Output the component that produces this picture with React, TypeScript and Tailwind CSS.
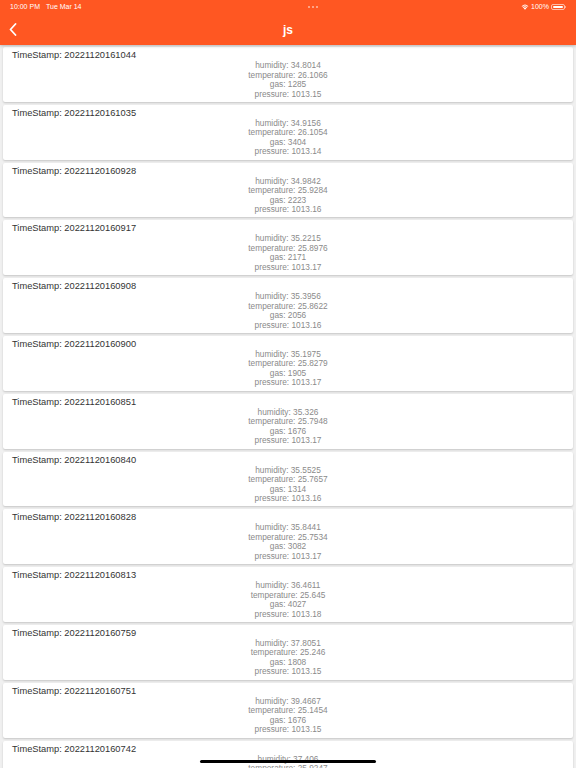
import React from "react";

type Row = { ts: string; h: string; t: string; g: string; p: string };

const rows: Row[] = [
  { ts: "20221120161044", h: "34.8014", t: "26.1066", g: "1285", p: "1013.15" },
  { ts: "20221120161035", h: "34.9156", t: "26.1054", g: "3404", p: "1013.14" },
  { ts: "20221120160928", h: "34.9842", t: "25.9284", g: "2223", p: "1013.16" },
  { ts: "20221120160917", h: "35.2215", t: "25.8976", g: "2171", p: "1013.17" },
  { ts: "20221120160908", h: "35.3956", t: "25.8622", g: "2056", p: "1013.16" },
  { ts: "20221120160900", h: "35.1975", t: "25.8279", g: "1905", p: "1013.17" },
  { ts: "20221120160851", h: "35.326", t: "25.7948", g: "1676", p: "1013.17" },
  { ts: "20221120160840", h: "35.5525", t: "25.7657", g: "1314", p: "1013.16" },
  { ts: "20221120160828", h: "35.8441", t: "25.7534", g: "3082", p: "1013.17" },
  { ts: "20221120160813", h: "36.4611", t: "25.645", g: "4027", p: "1013.18" },
  { ts: "20221120160759", h: "37.8051", t: "25.246", g: "1808", p: "1013.15" },
  { ts: "20221120160751", h: "39.4667", t: "25.1454", g: "1676", p: "1013.15" },
  { ts: "20221120160742", h: "37.406", t: "25.9247", g: "1502", p: "1013.16" },
];

function Card({ r }: { r: Row }) {
  return (
    <div className="h-[54.8px] shrink-0 bg-white rounded-[2px] shadow-[0_1px_2px_rgba(0,0,0,0.18)] flex flex-col pt-[2px]">
      <div className="pl-[9px] text-[9.3px] leading-[12px] text-[#333333]">TimeStamp: {r.ts}</div>
      <div className="flex flex-col items-center text-[8.3px] leading-[9.5px] text-[#8a8a8a]">
        <div>humidity: {r.h}</div>
        <div>temperature: {r.t}</div>
        <div>gas: {r.g}</div>
        <div>pressure: {r.p}</div>
      </div>
    </div>
  );
}

export default function App() {
  return (
    <div
      className="relative w-[576px] h-[768px] overflow-hidden bg-[#f0f0f0] flex flex-col"
      style={{ fontFamily: '"Liberation Sans", Arial, sans-serif' }}
    >
      <div className="relative z-10 h-[45px] shrink-0 bg-[#ff5722] shadow-[0_1px_3px_rgba(0,0,0,0.25)] flex flex-col text-white">
        <div className="h-[14px] flex items-center justify-between px-[10px] text-[7px]">
          <div className="flex gap-[6px]">
            <span>10:00 PM</span>
            <span>Tue Mar 14</span>
          </div>
          <div className="flex gap-[2px] ml-[24px]">
            <span className="w-[2px] h-[2px] rounded-full bg-white/60" />
            <span className="w-[2px] h-[2px] rounded-full bg-white/60" />
            <span className="w-[2px] h-[2px] rounded-full bg-white/60" />
          </div>
          <div className="flex items-center gap-[2px]">
            <svg width="8" height="6" viewBox="0 0 16 12">
              <path d="M8 11.5 L5.3 8.6 A4 4 0 0 1 10.7 8.6 Z" fill="white" />
              <path d="M3.4 6.6 A6.8 6.8 0 0 1 12.6 6.6 L11.3 8 A5 5 0 0 0 4.7 8 Z" fill="white" />
              <path d="M1.2 4.3 A10 10 0 0 1 14.8 4.3 L13.5 5.7 A8.1 8.1 0 0 0 2.5 5.7 Z" fill="white" />
            </svg>
            <span>100%</span>
            <div className="flex items-center">
              <div className="w-[14px] h-[6.5px] rounded-[2px] border border-white/60 p-[1px]">
                <div className="w-full h-full bg-white rounded-[1px]" />
              </div>
              <div className="w-[1px] h-[2.5px] bg-white/60 rounded-r" />
            </div>
          </div>
        </div>
        <div className="flex-1 relative flex items-center justify-center">
          <svg className="absolute left-[9px] top-[9px]" width="8" height="13" viewBox="0 0 8 13">
            <path d="M6.5 1 L1.5 6.5 L6.5 12" stroke="white" strokeWidth="1.8" fill="none" strokeLinecap="round" strokeLinejoin="round" />
          </svg>
          <span className="text-[12px] font-bold">js</span>
        </div>
      </div>
      <div className="flex flex-col gap-[3px] px-[3px] pt-[2px]">
        {rows.map((r) => (
          <Card key={r.ts} r={r} />
        ))}
      </div>
      <div className="absolute left-[200px] top-[759.5px] w-[176px] h-[3px] rounded-full bg-black" />
    </div>
  );
}
